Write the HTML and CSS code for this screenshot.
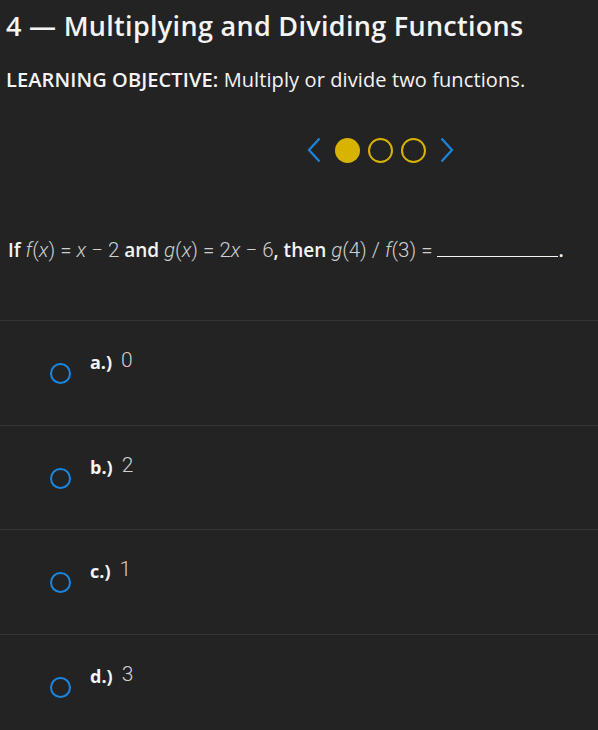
FILE: index.html
```html
<!DOCTYPE html>
<html lang="en">
<head>
	<meta charset="UTF-8">
	<meta name="viewport" content="width=device-width, initial-scale=1.0">
	<title>Multiplying and Dividing Functions</title>
	<link rel="stylesheet" href="styles.css">
</head>
<body>
<div class="lesson">
	<h1 class="lesson-title">4 — Multiplying and Dividing Functions</h1>
	<p class="objective"><b>LEARNING OBJECTIVE:</b> Multiply or divide two functions.</p>

	<!-- pager -->
	<div class="pager">
		<svg class="chev" width="14" height="26" viewBox="0 0 14 26"><path d="M12.5 1.5 L2 13 L12.5 24.5" fill="none" stroke="#1a86e0" stroke-width="2.2"/></svg>
		<span class="dot dot-on"></span>
		<span class="dot"></span>
		<span class="dot"></span>
		<svg class="chev" width="14" height="26" viewBox="0 0 14 26"><path d="M1.5 1.5 L12 13 L1.5 24.5" fill="none" stroke="#1a86e0" stroke-width="2.2"/></svg>
	</div>

	<p class="question">If <span class="m"><i>f</i>(<i>x</i>) = <i>x</i> − 2</span> and <span class="m"><i>g</i>(<i>x</i>) = 2<i>x</i> − 6</span>, then <span class="m"><i>g</i>(4) / <i>f</i>(3) =</span> <span class="blank"></span>.</p>
</div>

<ul class="choices">
	<li class="choice"><span class="radio"></span><span class="letter">a.)</span><span class="val">0</span></li>
	<li class="choice"><span class="radio"></span><span class="letter">b.)</span><span class="val">2</span></li>
	<li class="choice"><span class="radio"></span><span class="letter">c.)</span><span class="val">1</span></li>
	<li class="choice"><span class="radio"></span><span class="letter">d.)</span><span class="val">3</span></li>
</ul>
</body>
</html>
```

FILE: styles.css
```css
body {
	margin: 0;
	background-color: #232323;
	color: #f4f4f4;
	font-family: "Open Sans", Lato, sans-serif;
}
.lesson {
	padding: 0 6px;
}
.lesson-title {
	margin: 0;
	padding-top: 9px;
	font-size: 27px;
	font-weight: 600;
	letter-spacing: 0.3px;
	line-height: 34px;
}
.objective {
	margin: 25px 0 0;
	font-size: 20px;
	letter-spacing: 0.1px;
	line-height: 24px;
}
.objective b {
	font-weight: 600;
}
.pager {
	display: flex;
	align-items: center;
	gap: 8px;
	margin: 45px 0 0 301px;
	height: 26px;
}
.dot {
	width: 21px;
	height: 21px;
	border: 2px solid #d8b400;
	border-radius: 50%;
}
.dot-on {
	background-color: #d8b400;
	width: 25px;
	height: 25px;
	border: 0;
}
.chev:first-child {
	margin-right: 6px;
}
.chev:last-child {
	margin-left: 6px;
}
.question {
	margin: 75px 2px 0;
	font-size: 19px;
	font-weight: 600;
	line-height: 24px;
	height: 82px;
}
.m {
	font-family: Roboto, sans-serif;
	font-weight: 300;
	font-size: 20.5px;
	color: #cfcfcf;
}
.m i {
	font-style: italic;
}
.blank {
	display: inline-block;
	width: 121px;
	border-bottom: 1px solid #f4f4f4;
}
.choices {
	list-style: none;
	margin: 0;
	padding: 0;
}
.choice {
	display: flex;
	align-items: flex-start;
	height: 104.67px;
	border-top: 1px solid #353535;
	padding-left: 50px;
	box-sizing: border-box;
}
.radio {
	width: 17px;
	height: 17px;
	border: 2px solid #1a86e0;
	border-radius: 50%;
	margin-top: 42px;
}
.letter {
	margin: 29px 0 0 19px;
	font-size: 18px;
	font-weight: 700;
}
.val {
	margin: 0 0 0 9px;
	font-family: Roboto, sans-serif;
	font-weight: 300;
	font-size: 21px;
	line-height: 24px;
	padding-top: 27px;
	color: #cfcfcf;
}
```
